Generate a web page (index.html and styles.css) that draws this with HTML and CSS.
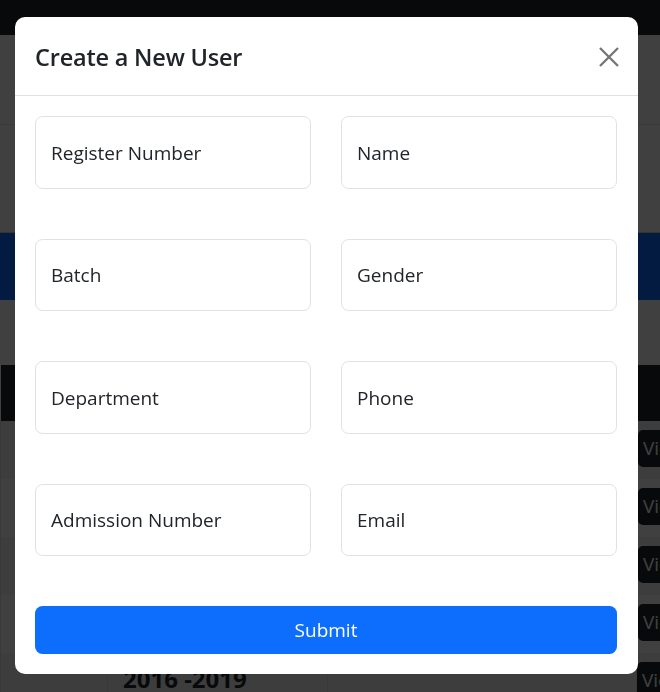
FILE: index.html
```html
<!DOCTYPE html>
<html lang="en">
<head>
<meta charset="utf-8">
<title>Create a New User</title>
<link rel="stylesheet" href="styles.css">
</head>
<body>
<div class="page">
  <nav class="navbar"></nav>
  <section class="intro"></section>
  <section class="filters"></section>
  <div class="banner"></div>
  <div class="spacer"></div>
  <table class="users">
    <colgroup><col class="c1"><col class="c2"><col class="c3"><col class="c4"></colgroup>
    <thead><tr><th></th><th></th><th></th><th></th></tr></thead>
    <tbody>
      <tr class="odd"><td></td><td></td><td></td><td class="act"><span class="btn-view">View</span></td></tr>
      <tr><td></td><td></td><td></td><td class="act"><span class="btn-view">View</span></td></tr>
      <tr class="odd"><td></td><td></td><td></td><td class="act"><span class="btn-view">View</span></td></tr>
      <tr><td></td><td></td><td></td><td class="act"><span class="btn-view">View</span></td></tr>
      <tr class="odd"><td></td><td class="year">2016 -2019</td><td></td><td class="act last"><span class="btn-view">View</span></td></tr>
    </tbody>
  </table>
</div>
<div class="backdrop"></div>
<div class="modal">
  <div class="modal-header">
    <h5 class="modal-title">Create a New User</h5>
    <button class="btn-close" type="button" aria-label="Close">
      <svg width="20" height="20" viewBox="0 0 20 20"><path d="M1 1 L19 19 M19 1 L1 19" stroke="#757575" stroke-width="2.3" stroke-linecap="butt" fill="none"/></svg>
    </button>
  </div>
  <form class="modal-body">
    <div class="fields">
      <input class="field" type="text" placeholder="Register Number">
      <input class="field" type="text" placeholder="Name">
      <input class="field" type="text" placeholder="Batch">
      <input class="field" type="text" placeholder="Gender">
      <input class="field" type="text" placeholder="Department">
      <input class="field" type="text" placeholder="Phone">
      <input class="field" type="text" placeholder="Admission Number">
      <input class="field" type="text" placeholder="Email">
    </div>
    <button class="submit" type="button">Submit</button>
  </form>
</div>
</body>
</html>
```
FILE: styles.css
```css
* { box-sizing: border-box; }
html, body { margin: 0; padding: 0; }
body {
  width: 660px;
  height: 692px;
  overflow: hidden;
  position: relative;
  background: #fff;
  color: #212529;
  font-family: "Open Sans", "Noto Sans", sans-serif;
}
.navbar { height: 35px; background: #212529; }
.intro { height: 90px; border-bottom: 1px solid #e6e6e6; }
.filters { height: 108px; border-bottom: 1px solid #cfcfcf; }
.banner { height: 67px; background: #0d6efd; }
.spacer { height: 65px; }

.users { border-collapse: collapse; table-layout: fixed; width: 1000px; }
.users .c1 { width: 107px; }
.users .c2 { width: 220px; }
.users .c3 { width: 309px; }
.users .c4 { width: 364px; }
.users thead th { height: 56px; background: #212529; padding: 0; }
.users td {
  height: 58px;
  padding: 9px 15px;
  vertical-align: top;
  border-left: 1px solid #dee2e6;
  border-right: 1px solid #dee2e6;
}
.users tr.odd td { background: #f2f2f2; }
.users td.act { padding-left: 1px; }
.users td.act.last { padding-left: 0; }
.users td.year {
  padding-top: 12px;
  font-size: 24px;
  font-weight: 700;
  line-height: 1.2;
  color: #212529;
}
.btn-view {
  display: inline-block;
  height: 37px;
  line-height: 37px;
  padding: 0 14px 0 5px;
  background: #212529;
  color: #fff;
  font-size: 19px;
  border-radius: 5px;
}

.backdrop {
  position: fixed;
  inset: 0;
  background: rgba(0, 0, 0, 0.75);
}

.modal {
  position: absolute;
  left: 15px;
  top: 17px;
  width: 623px;
  background: #fff;
  border-radius: 10px;
  overflow: hidden;
}
.modal-header {
  height: 79px;
  padding: 0 20px;
  display: flex;
  align-items: center;
  justify-content: space-between;
  border-bottom: 1px solid #dee2e6;
}
.modal-title {
  margin: 0;
  font-size: 23.5px;
  font-weight: 600;
  line-height: 1.2;
  color: #212529;
  padding-top: 3px;
  letter-spacing: -0.2px;
}
.btn-close {
  width: 20px;
  height: 20px;
  padding: 0;
  margin: 1px -1px 0 0;
  border: 0;
  background: transparent;
  display: flex;
}
.modal-body { padding: 20px; margin: 0; }
.fields {
  display: grid;
  grid-template-columns: 276px 276px;
  column-gap: 30px;
  row-gap: 50px;
}
.field {
  height: 72.5px;
  width: 100%;
  margin: 0;
  padding: 1px 15px 0;
  border: 1px solid #dee2e6;
  border-radius: 7.5px;
  background: #fff;
  font-family: inherit;
  font-size: 19px;
  color: #212529;
  outline: none;
}
.field::placeholder { color: #212529; opacity: 1; }
.submit {
  display: block;
  width: 582px;
  height: 47.5px;
  margin-top: 50px;
  border: 0;
  border-radius: 7.5px;
  background: #0d6efd;
  color: #fff;
  font-family: inherit;
  font-size: 19px;
  padding: 1px 0 0;
}
```
